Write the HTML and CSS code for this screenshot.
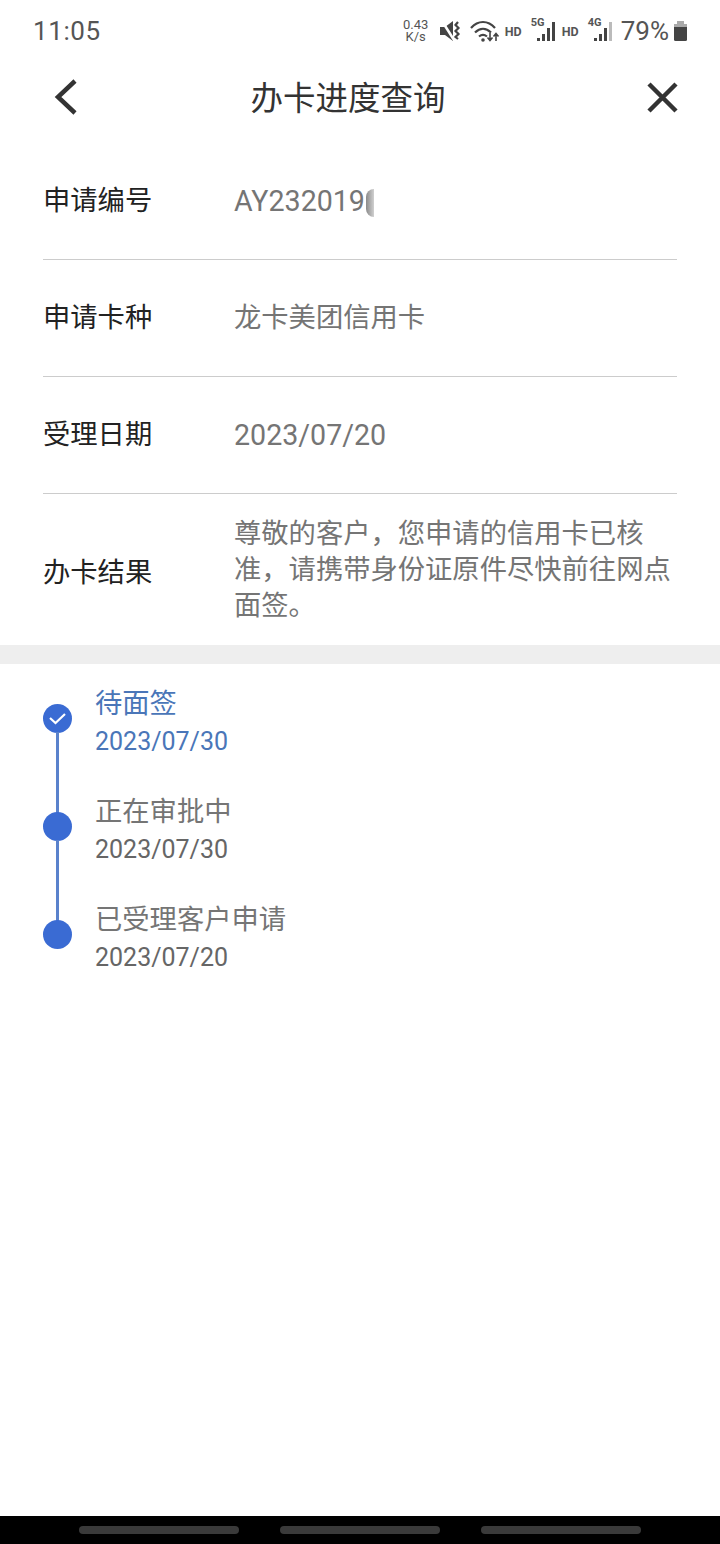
FILE: index.html
```html
<!DOCTYPE html>
<html lang="zh-CN">
<head>
    <meta charset="UTF-8">
    <meta name="viewport" content="width=device-width, initial-scale=1.0">
    <title>办卡进度查询</title>
    <link rel="stylesheet" href="styles.css">
</head>
<body>
    <!-- 状态栏 -->
    <div class="status-bar">
        <span class="status-time">11:05</span>
        <div class="status-right">
            <div class="net-speed"><span>0.43</span><span>K/s</span></div>
            <svg class="icon-mute" width="22" height="22" viewBox="0 0 22 22">
                <path d="M0 7h5l8-6v20l-8-6H0z" fill="#444"/>
                <path d="M2 1l12 19" stroke="#fff" stroke-width="2.500"/>
                <path d="M18 2l-2.500 3 3 3-3 3 3 3-3 3 2.500 2" fill="none" stroke="#444" stroke-width="2.200"/>
            </svg>
            <svg class="icon-wifi" width="30" height="22" viewBox="0 0 30 22">
                <path d="M1 8c7-8 17-8 24 0M5 12.500c5-5 11-5 16 0M9 16.500c3-2.500 5-2.500 8 0" fill="none" stroke="#444" stroke-width="2.200"/>
                <circle cx="13" cy="20" r="1.800" fill="#444"/>
                <path d="M20 13v7m-2.500-2.500l2.500 3 2.500-3M26 21v-7m-2.500 2.500l2.500-3 2.500 3" fill="none" stroke="#444" stroke-width="1.600"/>
            </svg>
            <span class="net-tag">HD</span>
            <div class="signal">
                <span class="signal-tag">5G</span>
                <svg width="26" height="24" viewBox="0 0 26 24">
                    <path d="M7 19h3v3H7zM12 15h3v7h-3zM17 9h3v13h-3zM22 3h3v19h-3z" fill="#444"/>
                </svg>
            </div>
            <span class="net-tag">HD</span>
            <div class="signal">
                <span class="signal-tag">4G</span>
                <svg width="26" height="24" viewBox="0 0 26 24">
                    <path d="M7 19h3v3H7zM12 15h3v7h-3zM17 9h3v13h-3z" fill="#444"/>
                    <path d="M22 3h3v19h-3z" fill="#bbb"/>
                </svg>
            </div>
            <span class="battery-text">79%</span>
            <svg class="icon-battery" width="15" height="20" viewBox="0 0 15 20">
                <path d="M4 0h7v3H4z" fill="#aaa"/>
                <path d="M1 3h13v3H1z" fill="#aaa"/>
                <path d="M1 6h13v12.500q0 1.500-1.500 1.500h-10q-1.500 0-1.500-1.500z" fill="#444"/>
            </svg>
        </div>
    </div>

    <!-- 顶部导航 -->
    <header class="nav">
        <svg class="nav-icon" width="34" height="40" viewBox="0 0 34 40">
            <path d="M27 4L10 20l17 16" fill="none" stroke="#333" stroke-width="4.500"/>
        </svg>
        <h1 class="nav-title">办卡进度查询</h1>
        <svg class="nav-icon" width="34" height="40" viewBox="0 0 34 40">
            <path d="M4 7l27 27M31 7L4 34" fill="none" stroke="#333" stroke-width="4.500"/>
        </svg>
    </header>

    <!-- 申请信息 -->
    <section class="info-list">
        <div class="info-row">
            <span class="info-label">申请编号</span>
            <span class="info-value info-num">AY232019<i class="cursor-mask"></i></span>
        </div>
        <div class="info-row">
            <span class="info-label">申请卡种</span>
            <span class="info-value">龙卡美团信用卡</span>
        </div>
        <div class="info-row">
            <span class="info-label">受理日期</span>
            <span class="info-value info-num">2023/07/20</span>
        </div>
        <div class="info-row info-row-last">
            <span class="info-label">办卡结果</span>
            <span class="info-value">尊敬的客户，您申请的信用卡已核准，请携带身份证原件尽快前往网点面签。</span>
        </div>
    </section>

    <div class="band"></div>

    <!-- 进度 -->
    <section class="timeline">
        <div class="step step-active">
            <div class="step-dot">
                <svg width="29" height="29" viewBox="0 0 29 29">
                    <path d="M7 14l5.500 5 9.500-9" fill="none" stroke="#fff" stroke-width="2.200"/>
                </svg>
            </div>
            <div class="step-text">
                <div class="step-title">待面签</div>
                <div class="step-date">2023/07/30</div>
            </div>
        </div>
        <div class="step">
            <div class="step-dot"></div>
            <div class="step-text">
                <div class="step-title">正在审批中</div>
                <div class="step-date">2023/07/30</div>
            </div>
        </div>
        <div class="step">
            <div class="step-dot"></div>
            <div class="step-text">
                <div class="step-title">已受理客户申请</div>
                <div class="step-date">2023/07/20</div>
            </div>
        </div>
    </section>

    <!-- 底部手势条 -->
    <footer class="home-bar">
        <span class="home-pill"></span>
        <span class="home-pill"></span>
        <span class="home-pill"></span>
    </footer>
</body>
</html>
```

FILE: styles.css
```css
* {
    margin: 0;
    padding: 0;
    box-sizing: border-box;
}

body {
    display: flex;
    flex-direction: column;
    height: 1544px;
    background-color: #fff;
    font-family: "Roboto", "Noto Sans CJK SC", sans-serif;
    overflow: hidden;
}

/* 状态栏 */
.status-bar {
    height: 60px;
    flex-shrink: 0;
    display: flex;
    align-items: center;
    justify-content: space-between;
    padding: 2px 32px 0 33px;
    color: #555;
}

.status-time {
    font-size: 26px;
    letter-spacing: 0.6px;
}

.status-right {
    display: flex;
    align-items: center;
}

.net-speed {
    width: 28px;
    display: flex;
    flex-direction: column;
    align-items: center;
    margin-right: 10px;
    font-size: 13px;
    line-height: 12px;
    color: #555;
}

.icon-mute {
    margin-right: 8px;
}

.icon-wifi {
    margin-right: 5px;
}

.net-tag {
    width: 18px;
    font-size: 12.500px;
    font-weight: 700;
    color: #555;
    margin-right: 7px;
}

.signal {
    position: relative;
    width: 26px;
    height: 24px;
    display: flex;
    align-items: flex-end;
    margin-right: 6px;
}

.signal-tag {
    position: absolute;
    top: -3px;
    left: 1px;
    font-size: 11px;
    font-weight: 700;
    color: #555;
}

.battery-text {
    font-size: 26px;
    margin: 0 4px 0 2px;
    color: #555;
}

/* 顶部导航 */
.nav {
    height: 76px;
    flex-shrink: 0;
    display: flex;
    align-items: center;
    justify-content: space-between;
    padding: 0 41px 2px 48px;
}

.nav-title {
    font-size: 32.500px;
    font-weight: 400;
    color: #333;
    margin: 0 31px 4px 0;
}

/* 申请信息 */
.info-list {
    padding: 7px 43px 0;
}

.info-row {
    height: 117px;
    display: flex;
    align-items: center;
    border-bottom: 1px solid #ccc;
}

.info-row-last {
    height: 151px;
    border-bottom: none;
}

.info-row-last .info-label {
    margin-top: 6px;
}

.info-label {
    width: 191px;
    flex-shrink: 0;
    font-size: 27.300px;
    line-height: 36px;
    color: #222;
}

.info-value {
    font-size: 27.300px;
    line-height: 36px;
    color: #757575;
}

.info-num {
    font-size: 28.600px;
}

.cursor-mask {
    display: inline-block;
    width: 8px;
    height: 28px;
    margin-left: 1px;
    vertical-align: -6px;
    border-radius: 8px 0 0 8px;
    background: linear-gradient(to right, #8a8a8a, #d0d0d0);
}

.band {
    height: 19px;
    flex-shrink: 0;
    background-color: #eee;
}

/* 进度 */
.timeline {
    flex: 1;
    padding: 21px 0 0 43px;
}

.step {
    position: relative;
    height: 108px;
    display: flex;
}

.step:not(:last-child)::after {
    content: "";
    position: absolute;
    left: 13px;
    top: 47px;
    width: 3px;
    height: 81px;
    background-color: #5a82cc;
}

.step-dot {
    width: 29px;
    height: 29px;
    margin-top: 19px;
    flex-shrink: 0;
    border-radius: 50%;
    background-color: #3a6bd3;
}

.step-text {
    margin-left: 23px;
}

.step-title {
    font-size: 27.300px;
    line-height: 38px;
    color: #757575;
}

.step-date {
    font-size: 25px;
    line-height: 38px;
    color: #666;
}

.step-active .step-title,
.step-active .step-date {
    color: #4a76b8;
}

/* 底部手势条 */
.home-bar {
    height: 28px;
    flex-shrink: 0;
    display: flex;
    justify-content: center;
    align-items: center;
    gap: 41px;
    background-color: #000;
}

.home-pill {
    width: 160px;
    height: 8px;
    border-radius: 4px;
    background-color: #3a3a3a;
}
```
